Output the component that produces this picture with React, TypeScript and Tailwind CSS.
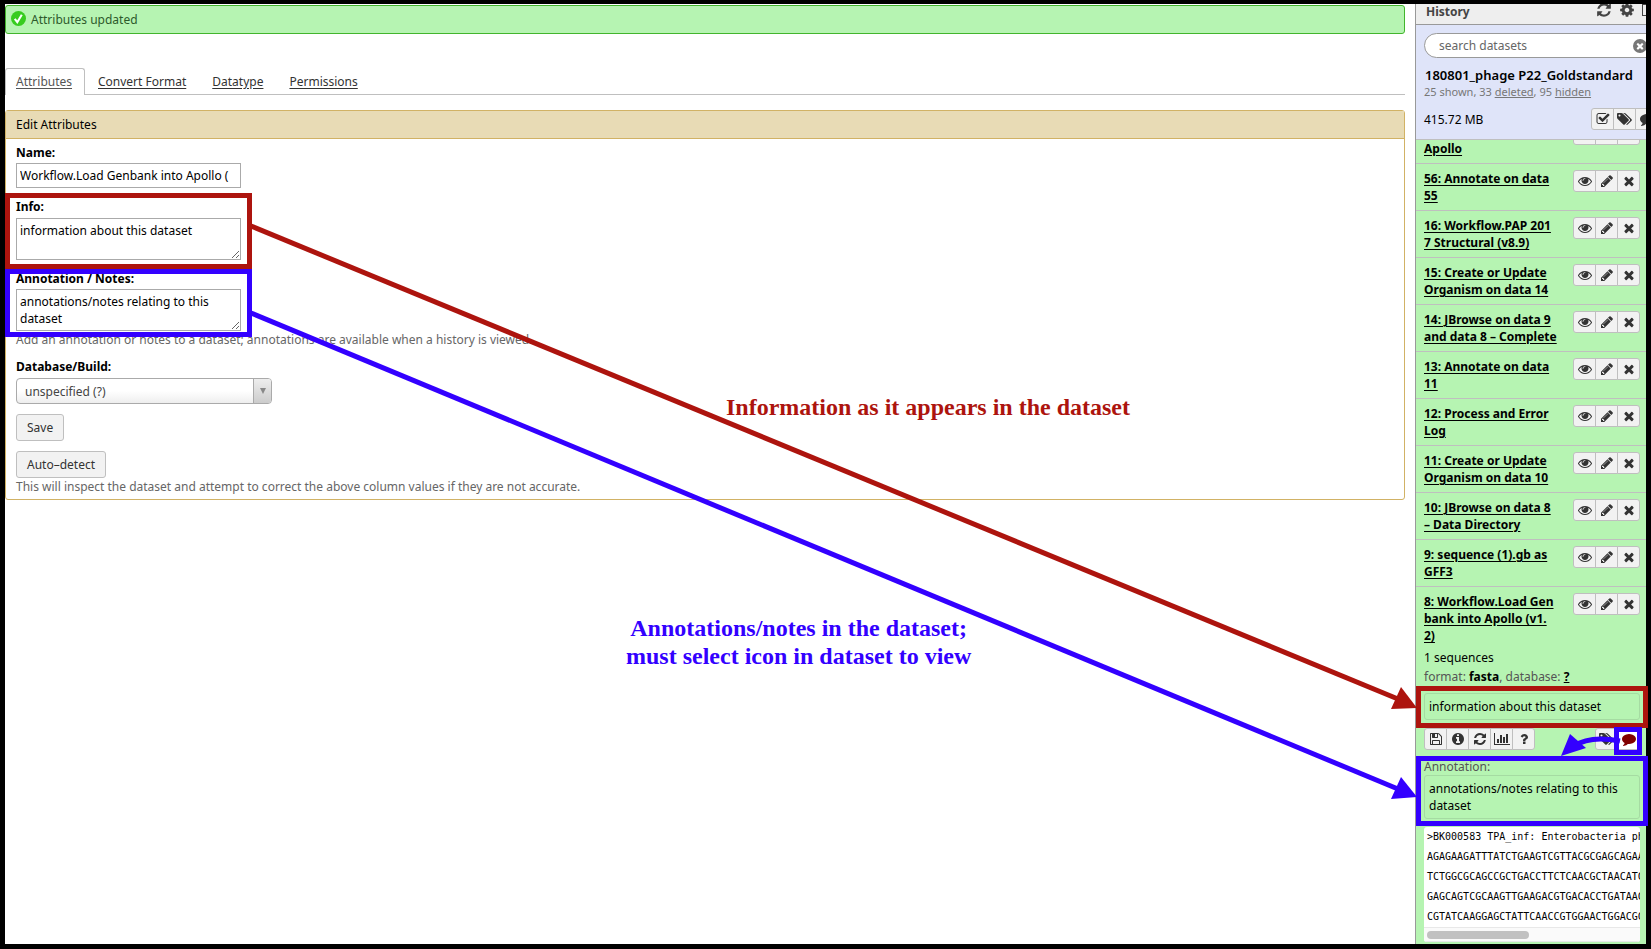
import React from "react";

const ICONS = {
  eye: [1792, "M1664 960q-152-236-381-353 61 104 61 225 0 185-131.5 316.5t-316.5 131.5-316.5-131.5-131.5-316.5q0-121 61-225-229 117-381 353 133 205 333.5 326.5t434.5 121.5 434.5-121.5 333.5-326.5zm-720-384q0-20-14-34t-34-14q-125 0-214.5 89.5t-89.5 214.5q0 20 14 34t34 14 34-14 14-34q0-86 61-147t147-61q20 0 34-14t14-34zm848 384q0 34-20 69-140 230-376.5 368.5t-499.5 138.5-499.5-139-376.5-368q-20-35-20-69t20-69q140-229 376.5-368t499.5-139 499.5 139 376.5 368q20 35 20 69z"],
  pencil: [1792, "M491 1536l91-91-235-235-91 91v107h128v128h107zm523-928q0-22-22-22-10 0-17 7l-542 542q-7 7-7 17 0 22 22 22 10 0 17-7l542-542q7-7 7-17zm-54-192l416 416-832 832h-416v-416zm683 96q0 53-37 90l-166 166-416-416 166-165q36-38 90-38 53 0 91 38l235 234q37 39 37 91z"],
  times: [1792, "M1490 1322q0 40-28 68l-136 136q-28 28-68 28t-68-28l-294-294-294 294q-28 28-68 28t-68-28l-136-136q-28-28-28-68t28-68l294-294-294-294q-28-28-28-68t28-68l136-136q28-28 68-28t68 28l294 294 294-294q28-28 68-28t68 28l136 136q28 28 28 68t-28 68l-294 294 294 294q28 28 28 68z"],
  refresh: [1792, "M1639 1056q0 5-1 7-64 268-268 434.5t-478 166.5q-146 0-282.5-55t-243.5-157l-129 129q-19 19-45 19t-45-19-19-45v-448q0-26 19-45t45-19h448q26 0 45 19t19 45-19 45l-137 137q71 66 161 102t187 36q134 0 250-65t186-179q11-17 53-117 8-23 30-23h192q13 0 22.5 9.5t9.5 22.5zm25-800v448q0 26-19 45t-45 19h-448q-26 0-45-19t-19-45 19-45l138-138q-148-137-349-137-134 0-250 65t-186 179q-11 17-53 117-8 23-30 23h-199q-13 0-22.5-9.5t-9.5-22.5v-7q65-268 270-434.5t480-166.5q146 0 284 55.5t245 156.5l130-129q19-19 45-19t45 19 19 45z"],
  cog: [1792, "M1152 896q0-106-75-181t-181-75-181 75-75 181 75 181 181 75 181-75 75-181zm512-109v222q0 12-8 23t-20 13l-185 28q-19 54-39 91 35 50 107 138 10 12 10 25t-9 23q-27 37-99 108t-94 71q-12 0-26-9l-138-108q-44 23-91 38-16 136-29 186-7 28-36 28h-222q-14 0-24.5-8.5t-11.5-21.5l-28-184q-49-16-90-37l-141 107q-10 9-25 9-14 0-25-11-126-114-165-168-7-10-7-23 0-12 8-23 15-21 51-66.5t54-70.5q-27-50-41-99l-183-27q-13-2-21-12.5t-8-23.5v-222q0-12 8-23t19-13l186-28q14-46 39-92-40-57-107-138-10-12-10-24 0-10 9-23 26-36 98.5-107.5t94.5-71.5q13 0 26 10l138 107q44-23 91-38 16-136 29-186 7-28 36-28h222q14 0 24.5 8.5t11.5 21.5l28 184q49 16 90 37l142-107q9-9 24-9 13 0 25 10 129 119 165 170 7 8 7 22 0 12-8 23-15 21-51 66.5t-54 70.5q26 50 41 98l183 28q13 2 21 12.5t8 23.5z"],
  tags: [1920, "M448 448q0-53-37.5-90.5t-90.5-37.5-90.5 37.5-37.5 90.5 37.5 90.5 90.5 37.5 90.5-37.5 37.5-90.5zm1067 576q0 53-37 90l-491 492q-39 37-91 37-53 0-90-37l-715-716q-38-37-64.5-101t-26.5-117v-416q0-52 38-90t90-38h416q53 0 117 26.5t102 64.5l715 714q37 39 37 91zm384 0q0 53-37 90l-491 492q-39 37-91 37-36 0-59-14t-53-45l470-470q37-37 37-90 0-52-37-91l-715-714q-38-38-102-64.5t-117-26.5h224q53 0 117 26.5t102 64.5l715 714q37 39 37 91z"],
  comment: [1792, "M1792 896q0 174-120 321.5t-326 233-450 85.5q-70 0-145-8-198 175-460 242-49 14-114 22-17 2-30.5-9t-17.5-29v-1q-3-4-.5-12t2-10 4.5-9.5l6-9 7-8.5 8-9q7-8 31-34.5t34.5-38 31-39.5 32.5-51 27-59 26-76q-157-89-247.5-220t-90.5-281q0-130 71-248.5t191-204.5 286-136.5 348-50.5q244 0 450 85.5t326 233 120 321.5z"],
  check: [1792, "M1472 930v318q0 119-84.5 203.5t-203.5 84.5h-832q-119 0-203.5-84.5t-84.5-203.5v-832q0-119 84.5-203.5t203.5-84.5h832q63 0 117 25 15 7 18 23 3 17-9 29l-49 49q-10 10-23 10-3 0-9-2-23-6-45-6h-832q-66 0-113 47t-47 113v832q0 66 47 113t113 47h832q66 0 113-47t47-113v-254q0-13 9-22l64-64q10-10 23-10 6 0 12 3 20 8 20 29zm231-489l-814 814q-24 24-57 24t-57-24l-430-430q-24-24-24-57t24-57l110-110q24-24 57-24t57 24l263 263 647-647q24-24 57-24t57 24l110 110q24 24 24 57t-24 57z"],
  save: [1792, "M512 1536h768v-384h-768v384zm896 0h128v-896q0-14-10-38.5t-20-34.5l-281-281q-10-10-34-20t-39-10v416q0 40-28 68t-68 28h-576q-40 0-68-28t-28-68v-416h-128v1280h128v-416q0-40 28-68t68-28h832q40 0 68 28t28 68v416zm-384-928v-320q0-13-9.5-22.5t-22.5-9.5h-192q-13 0-22.5 9.5t-9.5 22.5v320q0 13 9.5 22.5t22.5 9.5h192q13 0 22.5-9.5t9.5-22.5zm640 32v928q0 40-28 68t-68 28h-1344q-40 0-68-28t-28-68v-1344q0-40 28-68t68-28h928q40 0 88 20t76 48l280 280q28 28 48 76t20 88z"],
  info: [1792, "M1152 1376v-160q0-14-9-23t-23-9h-96v-512q0-14-9-23t-23-9h-320q-14 0-23 9t-9 23v160q0 14 9 23t23 9h96v320h-96q-14 0-23 9t-9 23v160q0 14 9 23t23 9h448q14 0 23-9t9-23zm-128-896v-160q0-14-9-23t-23-9h-192q-14 0-23 9t-9 23v160q0 14 9 23t23 9h192q14 0 23-9t9-23zm640 416q0 209-103 385.5t-279.5 279.5-385.5 103-385.5-103-279.5-279.5-103-385.5 103-385.5 279.5-279.5 385.5-103 385.5 103 279.5 279.5 103 385.5z"],
  chart: [2048, "M640 896v512h-256v-512h256zm384-512v1024h-256v-1024h256zm1024 1152v128h-2048v-1536h128v1408h1920zm-640-896v768h-256v-768h256zm384-384v1152h-256v-1152h256z"],
  question: [1792, "M1088 1256v240q0 16-12 28t-28 12h-240q-16 0-28-12t-12-28v-240q0-16 12-28t28-12h240q16 0 28 12t12 28zm316-600q0 54-15.5 101t-35 76.5-55 59.5-57.5 43.5-61 35.5q-41 23-68.5 65t-27.5 67q0 17-12 32.5t-28 15.5h-240q-15 0-25.5-18.5t-10.5-37.5v-45q0-83 65-156.5t143-108.5q59-27 84-56t25-76q0-42-46.5-74t-107.5-32q-65 0-108 29-35 25-107 115-13 16-31 16-12 0-25-8l-164-125q-13-10-15.5-25t5.5-28q160-266 464-266 80 0 161 31t146 83 106 127.5 41 158.5z"],
} as const;

type IconName = keyof typeof ICONS;

function Icon({ name, className = "h-[14px]" }: { name: IconName; className?: string }) {
  const [width, path] = ICONS[name];
  return (
    <svg viewBox={`0 0 ${width} 1792`} className={`${className} w-auto shrink-0 fill-current`} aria-hidden="true">
      <path d={path} />
    </svg>
  );
}

function IconGroup({ items }: { items: { icon: IconName; label: string; className?: string }[] }) {
  return (
    <div className="flex h-[22px] shrink-0">
      {items.map(({ icon, label, className = "bg-[#f2f2f2] text-[#333]" }) => (
        <button
          key={label}
          type="button"
          aria-label={label}
          className={`-mr-px flex w-[23px] items-center justify-center border border-[#bfbfbf] first:rounded-l-[3px] last:mr-0 last:rounded-r-[3px] ${className}`}
        >
          <Icon name={icon} />
        </button>
      ))}
    </div>
  );
}

const ROW_ACTIONS: { icon: IconName; label: string }[] = [
  { icon: "eye", label: "View data" },
  { icon: "pencil", label: "Edit attributes" },
  { icon: "times", label: "Delete" },
];

const DATASETS = [
  "56: Annotate on data\n55",
  "16: Workflow.PAP 201\n7 Structural (v8.9)",
  "15: Create or Update\nOrganism on data 14",
  "14: JBrowse on data 9\nand data 8 – Complete",
  "13: Annotate on data\n11",
  "12: Process and Error\nLog",
  "11: Create or Update\nOrganism on data 10",
  "10: JBrowse on data 8\n– Data Directory",
  "9: sequence (1).gb as\nGFF3",
];

function DatasetTitle({ title }: { title: string }) {
  return (
    <div className="flex justify-between">
      <a href="#dataset" className="whitespace-pre font-bold leading-[17px] text-black underline underline-offset-2">
        {title}
      </a>
      <IconGroup items={ROW_ACTIONS} />
    </div>
  );
}

const PEEK = [
  ">BK000583 TPA_inf: Enterobacteria ph",
  "AGAGAAGATTTATCTGAAGTCGTTACGCGAGCAGAA",
  "TCTGGCGCAGCCGCTGACCTTCTCAACGCTAACATC",
  "GAGCAGTCGCAAGTTGAAGACGTGACACCTGATAAC",
  "CGTATCAAGGAGCTATTCAACCGTGGAACTGGACGC",
];

function HistoryPanel() {
  return (
    <aside className="flex w-[231px] shrink-0 flex-col overflow-hidden border-l border-[#999] bg-[#b6f4b2]">
      <header className="flex h-[21px] shrink-0 items-center border-b border-[#999] bg-[#eee] pl-[10px] text-[#444]">
        <h2 className="grow pb-1 font-bold">History</h2>
        <div className="-mr-3 flex shrink-0 items-center gap-[7px] pb-2">
          <button type="button" aria-label="Refresh history"><Icon name="refresh" className="h-4" /></button>
          <button type="button" aria-label="History options"><Icon name="cog" className="h-4" /></button>
          <button type="button" aria-label="View all histories" className="h-3 w-4 border border-[#444]" />
        </div>
      </header>

      <section className="h-[115px] shrink-0 border-b border-[#bfbfbf] bg-[#dfe4f9] pl-2 pt-2">
        <div className="-mr-5 flex h-[25px] items-center rounded-full border border-[#999] bg-white pl-[14px] pr-[18px]">
          <input type="text" aria-label="search datasets" placeholder="search datasets" className="w-full min-w-0 grow placeholder:text-[#666] outline-none" />
          <span className="flex size-[14px] shrink-0 items-center justify-center rounded-full bg-[#777] text-white"><Icon name="times" className="h-[10px]" /></span>
        </div>
        <h3 className="mt-[9px] whitespace-nowrap pl-px text-[13px] font-semibold leading-[17px] text-black">180801_phage P22_Goldstandard</h3>
        <p className="whitespace-nowrap text-[11px] leading-4 text-[#777]">
          25 shown, 33 <a href="#deleted" className="underline">deleted</a>, 95 <a href="#hidden" className="underline">hidden</a>
        </p>
        <div className="-mr-3 mt-2 flex items-center justify-between">
          <span className="pt-0.5 text-black">415.72 MB</span>
          <IconGroup items={[{ icon: "check", label: "Select datasets" }, { icon: "tags", label: "Edit history tags" }, { icon: "comment", label: "Edit history annotation" }]} />
        </div>
      </section>

      <ul className="min-h-0 grow overflow-hidden">
        <li className="-mt-[23px] h-[47px] border-b border-[#bfbfbf] pl-2 pr-[6px] pt-[6px]"><DatasetTitle title={"\nApollo"} /></li>
        {DATASETS.map((title) => (
          <li key={title} className="h-[47px] border-b border-[#bfbfbf] pl-2 pr-[6px] pt-[6px]">
            <DatasetTitle title={title} />
          </li>
        ))}
        <li className="pl-2 pr-[6px] pt-[6px]">
          <DatasetTitle title={"8: Workflow.Load Gen\nbank into Apollo (v1.\n2)"} />
          <p className="mt-[5px] leading-[17px] text-black">1 sequences</p>
          <p className="mt-[2px] whitespace-nowrap leading-[17px] text-[#555]">
            format: <b className="font-bold text-black">fasta</b>, database: <a href="#database" className="font-bold text-black underline">?</a>
          </p>
          <div className="mt-2 rounded-[3px] border border-[#a5dba2] px-1 py-1 leading-[17px] text-black">information about this dataset</div>
          <div className="mt-2 flex justify-between">
            <IconGroup items={[{ icon: "save", label: "Download" }, { icon: "info", label: "View details" }, { icon: "refresh", label: "Run this job again" }, { icon: "chart", label: "Visualize" }, { icon: "question", label: "Help" }]} />
            <IconGroup items={[{ icon: "tags", label: "Edit dataset tags" }, { icon: "comment", label: "Edit dataset annotation", className: "bg-white text-[#800000]" }]} />
          </div>
          <p className="mt-2 leading-[17px] text-[#555]">Annotation:</p>
          <div className="rounded-[3px] border border-[#a5dba2] px-1 py-1 leading-[17px] text-black">annotations/notes relating to this<br />dataset</div>
          <div className="mt-2 overflow-hidden rounded-[3px] bg-white font-['DejaVu_Sans_Mono',monospace] text-[10px] leading-5 text-black">
            <pre className="overflow-hidden pl-[3px] font-[inherit]">{PEEK.join("\n")}</pre>
            <div className="flex h-[15px] items-center border-y border-[#e8e8e8] bg-[#fafafa] pl-[3px]"><div className="h-2 w-[102px] rounded-full bg-[#c1c1c1]" /></div>
          </div>
        </li>
      </ul>
    </aside>
  );
}

const BUTTON = "h-[27px] self-start rounded-[3px] border border-[#bfbfbf] bg-[#f2f2f2] px-[10px] text-[#333]";
const FIELD = "block w-[225px] border border-[#aaa] pl-[3px] text-black outline-none";

function AttributesForm() {
  return (
    <form className="mt-[15px] rounded-[3px] border border-[#d1b265] text-black">
      <h2 className="flex h-7 items-center border-b border-[#d1b265] bg-[#e8dbb5] px-[10px]">Edit Attributes</h2>
      <div className="flex flex-col px-[10px] pb-[4px] pt-[5px] leading-[17px]">
        <label htmlFor="name" className="font-bold">Name:</label>
        <input id="name" type="text" defaultValue="Workflow.Load Genbank into Apollo (" className={`${FIELD} mt-[2px] h-[25px]`} />
        <label htmlFor="info" className="mt-[10px] font-bold">Info:</label>
        <textarea id="info" defaultValue="information about this dataset" className={`${FIELD} mt-[3px] h-[42px] pt-[3px]`} />
        <label htmlFor="notes" className="mt-[10px] font-bold">Annotation / Notes:</label>
        <textarea id="notes" defaultValue="annotations/notes relating to this dataset" className={`${FIELD} mt-[2px] h-[42px] overflow-hidden pr-4 pt-[3px]`} />
        <p className="text-[#666]">Add an annotation or notes to a dataset; annotations are available when a history is viewed.</p>
        <label htmlFor="build" className="mt-[10px] font-bold">Database/Build:</label>
        <div className="relative mt-[3px] flex w-64">
          <select id="build" className="h-[26px] w-full appearance-none rounded-[4px] border border-[#aaa] bg-linear-to-b from-white from-50% to-[#eee] px-2 text-[#444] outline-none">
            <option>unspecified (?)</option>
          </select>
          <span className="pointer-events-none absolute inset-y-px right-px flex w-[18px] items-center justify-center rounded-r-[3px] border-l border-[#aaa] bg-linear-to-b from-[#eee] to-[#ccc]">
            <svg viewBox="0 0 6 6" className="size-[6px] fill-[#888]"><path d="M0 0h6L3 6z" /></svg>
          </span>
        </div>
        <button type="button" className={`${BUTTON} mt-[10px]`}>Save</button>
        <button type="button" className={`${BUTTON} mt-[10px]`}>Auto–detect</button>
        <p className="text-[#666]">This will inspect the dataset and attempt to correct the above column values if they are not accurate.</p>
      </div>
    </form>
  );
}

function Callouts() {
  return (
    <div className="pointer-events-none absolute inset-0">
      <svg viewBox="0 0 1651 949" className="absolute left-0 top-0 h-[949px] w-[1651px]" fill="none" strokeWidth="5" aria-hidden="true">
        <g stroke="#ad140e">
          <rect x="7.500" y="195.500" width="242" height="71" />
          <rect x="1418.500" y="688.500" width="227" height="37" />
          <path d="M251 226L1398 699" />
          <path d="M1401 687L1417 708L1391 709z" fill="#ad140e" stroke="none" />
        </g>
        <g stroke="#3300ff">
          <rect x="7.500" y="271.500" width="242" height="63" />
          <rect x="1418.500" y="758.500" width="227" height="65" />
          <path d="M251 313L1398 789" />
          <path d="M1401 777L1417 797L1391 799z" fill="#3300ff" stroke="none" />
          <path d="M1616.500 729.500h23v23h-23z" />
          <path d="M1620 741Q1590 735 1574 746" />
          <path d="M1570 734L1561 756L1586 748z" fill="#3300ff" stroke="none" />
        </g>
      </svg>
      <p className="absolute left-[726px] top-[393px] whitespace-nowrap font-['Liberation_Serif',serif] text-[24px] font-bold leading-7 text-[#ad140e]">Information as it appears in the dataset</p>
      <p className="absolute left-[626px] top-[614px] whitespace-nowrap text-center font-['Liberation_Serif',serif] text-[24px] font-bold leading-7 text-[#3300ff]">Annotations/notes in the dataset;<br />must select icon in dataset to view</p>
    </div>
  );
}

export default function App() {
  return (
    <div className="relative flex h-screen overflow-hidden bg-black px-[5px] pb-[5px] pt-1 font-['Noto_Sans',sans-serif] text-[12px]">
      <main className="min-w-0 grow bg-white pr-[10px] pt-px">
        <div role="status" className="flex h-[29px] items-center gap-[5px] rounded-[3px] border border-[#42b52c] bg-[#b6f4b2] pl-[5px] text-[#2d5a2b]">
          <svg viewBox="0 0 16 16" className="mb-0.5 size-[15px]" aria-hidden="true">
            <circle cx="8" cy="8" r="8" fill="#37cc1f" />
            <path d="M4 8.500L6.700 12L11.500 4" fill="none" stroke="#fff" strokeWidth="2.200" />
          </svg>
          Attributes updated
        </div>
        <nav className="mt-[34px] flex h-[27px] border-b border-[#bfbfbf] text-[#333]">
          <a href="#attributes" className="-mb-px flex w-20 items-center rounded-t-[3px] border border-b-0 border-[#bfbfbf] bg-white pl-[10px] text-[#555] underline underline-offset-2">Attributes</a>
          <a href="#convert" className="ml-[13px] flex items-center pt-0.5 underline underline-offset-2">Convert Format</a>
          <a href="#datatype" className="ml-[26px] flex items-center pt-0.5 underline underline-offset-2">Datatype</a>
          <a href="#permissions" className="ml-[26px] flex items-center pt-0.5 underline underline-offset-2">Permissions</a>
        </nav>
        <AttributesForm />
      </main>
      <HistoryPanel />
      <Callouts />
    </div>
  );
}
